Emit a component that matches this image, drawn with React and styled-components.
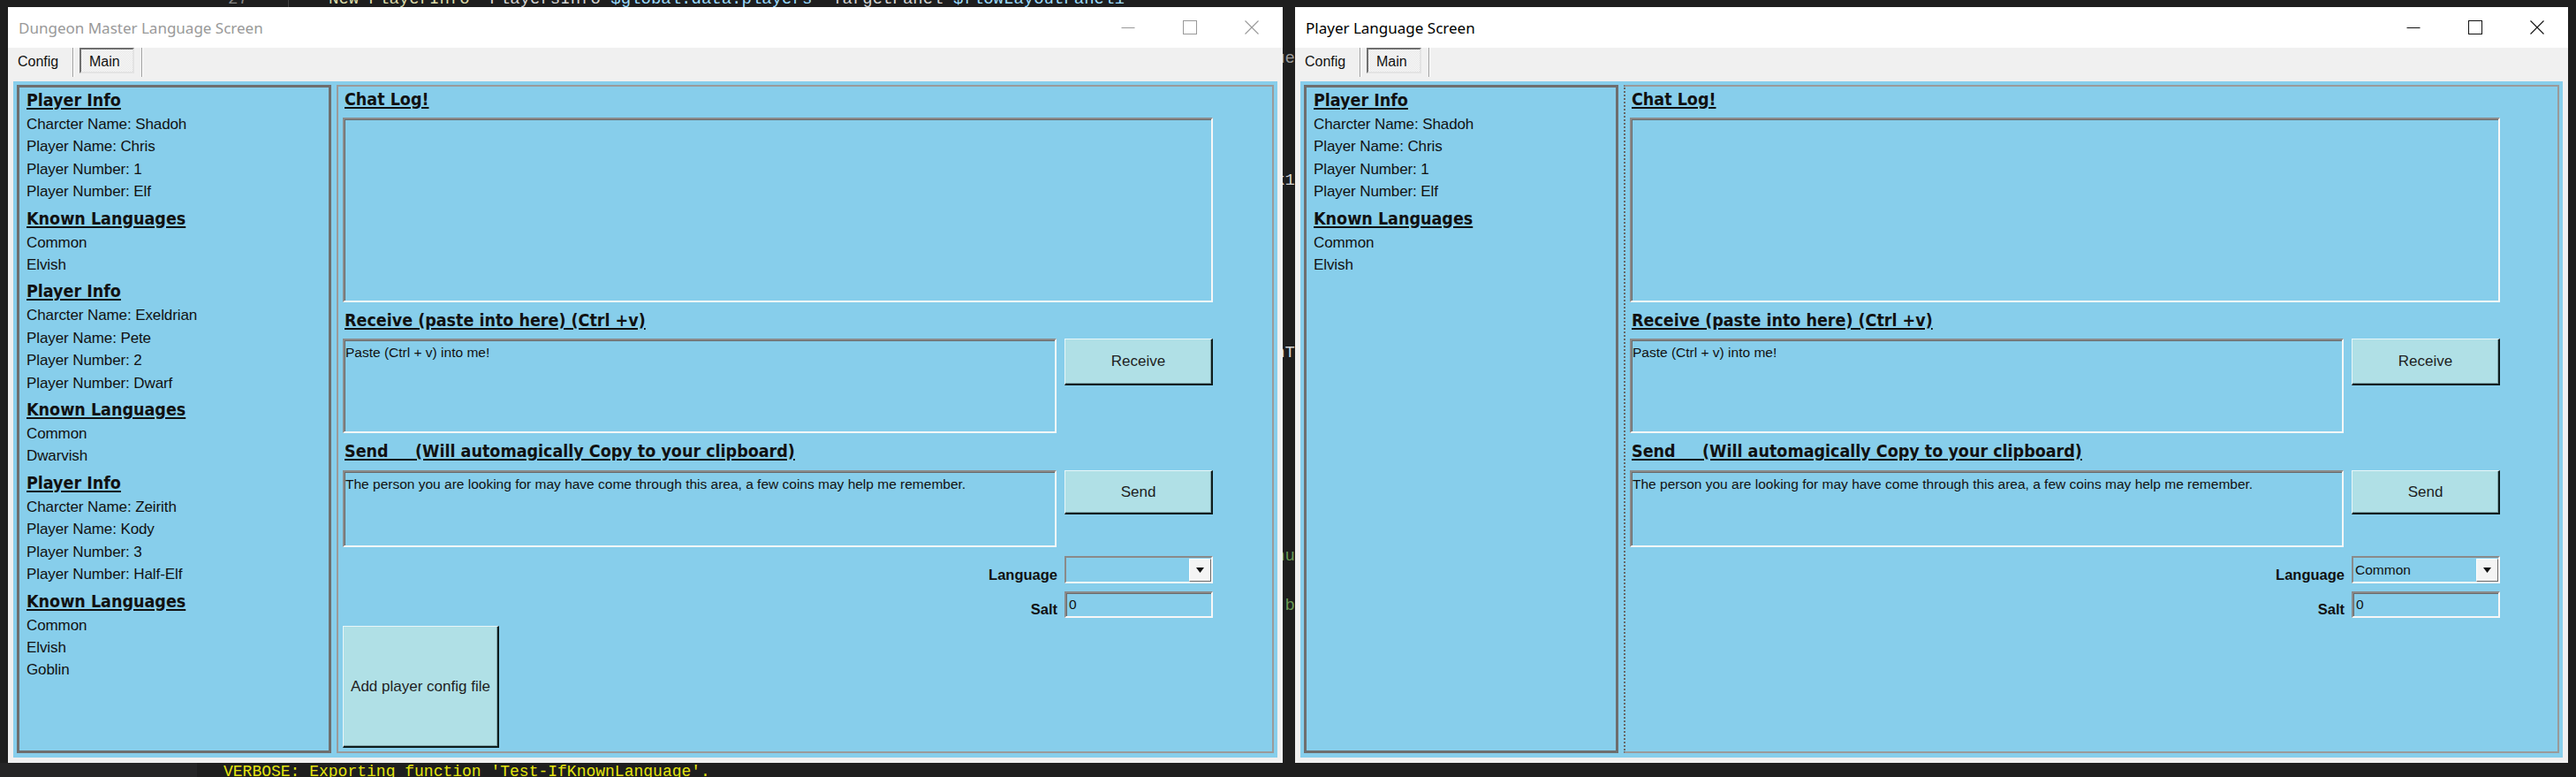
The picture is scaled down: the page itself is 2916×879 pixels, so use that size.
import React from 'react'
import styled, { createGlobalStyle } from 'styled-components'

/* ------------------------------ Global ----------------------------------- */
const GlobalStyle = createGlobalStyle`
  html, body {
    margin: 0;
    padding: 0;
    background: #1e1e1e;
  }
  body {
    width: 2916px;
    height: 879px;
    overflow: hidden;
    font-family: "Liberation Sans", Arial, sans-serif;
  }
`

const SKY = '#87ceeb'
const POWDER = '#b0e0e6'

/* ------------------------------ Desktop ---------------------------------- */
const Desktop = styled.div`
  width: 2916px;
  height: 879px;
  display: flex;
  flex-direction: column;
  background: #1e1e1e;
  overflow: hidden;
`

const CodeStrip = styled.div`
  height: 8px;
  overflow: hidden;
  display: flex;
  align-items: flex-start;
  font-family: "Liberation Mono", "DejaVu Sans Mono", monospace;
  font-size: 19px;
  line-height: 20px;
  white-space: pre;
`

const LineNo = styled.span`
  margin: -11px 0 0 258px;
  width: 68px;
  color: #858585;
`

const Guide = styled.span`
  width: 1px;
  height: 8px;
  background: #404040;
  margin-right: 45px;
`

const Code = styled.span`
  margin-top: -11px;
  color: ${p => p.$c || '#d4d4d4'};
`

const WindowRow = styled.div`
  display: flex;
  padding-left: 9px;
  height: 855px;
`

/* the editor text peeking out between the two windows */
const Gutter = styled.div`
  width: 14px;
  flex-shrink: 0;
  overflow: hidden;
  display: flex;
  flex-direction: column;
  align-items: flex-end;
  font-family: "Liberation Mono", "DejaVu Sans Mono", monospace;
  font-size: 19px;
  line-height: 20px;
  white-space: pre;
`

const Peek = styled.span`
  margin-top: ${p => p.$mt}px;
  color: ${p => p.$c || '#d4d4d4'};
`

const BottomStrip = styled.div`
  height: 16px;
  display: flex;
  overflow: hidden;
  font-family: "Liberation Mono", "DejaVu Sans Mono", monospace;
  font-size: 18px;
  line-height: 18px;
  white-space: pre;
`

const SideShade = styled.div`
  width: 223px;
  background: #252526;
`

const Verbose = styled.span`
  margin: 1px 0 0 30px;
  color: #e5e510;
`

/* ------------------------------ Window ----------------------------------- */
const Window = styled.div`
  width: ${p => p.$width}px;
  height: 855px;
  display: flex;
  flex-direction: column;
  background: #f0f0f0;
  flex-shrink: 0;
`

const TitleBar = styled.div`
  height: 46px;
  background: #fff;
  display: flex;
  align-items: center;
  flex-shrink: 0;
`

const Title = styled.div`
  padding-left: 12px;
  font-family: "Noto Sans", "Open Sans", sans-serif;
  font-size: 17px;
  color: ${p => (p.$active ? '#000' : '#999')};
`

const Captions = styled.div`
  margin-left: auto;
  display: flex;
  color: ${p => (p.$active ? '#111' : '#999')};
`

const CaptionButton = styled.div`
  width: 70px;
  height: 46px;
  display: flex;
  align-items: center;
  justify-content: center;
`

const TabStrip = styled.div`
  height: 38px;
  display: flex;
  align-items: flex-start;
  padding-left: 11px;
  flex-shrink: 0;
  font-size: 16px;
  color: #111;
`

const TabLabel = styled.div`
  width: 62px;
  height: 32px;
  line-height: 32px;
`

const TabSep = styled.div`
  width: 1px;
  height: 33px;
  background: #a0a0a0;
  border-right: 1px solid #fff;
  margin-left: ${p => p.$ml || 0}px;
`

const TabButton = styled.div`
  margin-left: 6px;
  width: 62px;
  height: 29px;
  box-sizing: border-box;
  border: 2px solid;
  border-color: #6f6f6f #e3e3e3 #e3e3e3 #6f6f6f;
  padding: 2px 0 0 9px;
  line-height: 23px;
  background-color: #fafafa;
  background-image: repeating-conic-gradient(#e6e6e6 0 25%, #fafafa 0 50%);
  background-size: 2px 2px;
`

const Body = styled.div`
  flex: 1;
  padding: 0 6px 6px;
  display: flex;
`

const TabPage = styled.div`
  flex: 1;
  background: ${SKY};
  padding: 4px 4px 5px;
  display: flex;
  gap: 6px;
`

/* ------------------------------ Panels ----------------------------------- */
const LeftPanel = styled.div`
  width: 356px;
  flex-shrink: 0;
  box-sizing: border-box;
  border: 3px solid #6e6e6e;
  padding: 0 8px;
`

const RightPanel = styled.div`
  flex: 1;
  box-sizing: border-box;
  border: 2px solid #9a9a9a;
  border-left-style: ${p => (p.$focused ? 'dotted' : 'solid')};
  border-left-color: ${p => (p.$focused ? '#666' : '#9a9a9a')};
  padding-left: 5px;
  display: flex;
  flex-direction: column;
  align-items: flex-start;
`

const Heading = styled.div`
  font-family: "DejaVu Sans Condensed", "DejaVu Sans", sans-serif;
  font-stretch: condensed;
  font-weight: bold;
  font-size: 19.5px;
  line-height: 29px;
  color: #111;
  text-decoration: underline;
  text-decoration-thickness: 2px;
  text-underline-offset: 2px;
  white-space: pre;
  margin-top: ${p => p.$mt ?? 3}px;
  margin-left: ${p => p.$ml || 0}px;
`

const Line = styled.div`
  font-size: 17px;
  letter-spacing: -0.1px;
  line-height: 25.4px;
  color: #111;
  white-space: nowrap;
`

const TextBox = styled.div`
  width: ${p => p.$width}px;
  height: ${p => p.$height}px;
  margin-top: ${p => p.$mt || 0}px;
  box-sizing: border-box;
  flex-shrink: 0;
  background: ${SKY};
  border: 2px solid;
  border-color: #8a8a8a #f7f7f7 #f7f7f7 #8a8a8a;
  box-shadow: inset 1px 1px 0 #6a6a6a;
  padding: 5px 0 0 1px;
  font-size: 15.5px;
  line-height: 18px;
  color: #111;
  white-space: nowrap;
  overflow: hidden;
`

const Row = styled.div`
  display: flex;
  gap: 9px;
  align-items: flex-start;
  margin-top: ${p => p.$mt || 0}px;
`

const Button = styled.div`
  width: ${p => p.$width}px;
  height: ${p => p.$height}px;
  margin-top: ${p => p.$mt || 0}px;
  box-sizing: border-box;
  flex-shrink: 0;
  background: ${POWDER};
  border-style: solid;
  border-width: 1px 2px 2px 1px;
  border-color: #e8f6f8 #0e1c1c #0e1c1c #e8f6f8;
  box-shadow: inset -1px -1px 0 #7fa5aa;
  display: flex;
  align-items: center;
  justify-content: center;
  font-size: 17px;
  color: #1e1e1e;
  white-space: nowrap;
`

const FieldRow = styled.div`
  width: 985px;
  display: flex;
  justify-content: flex-end;
  align-items: flex-end;
  gap: 8px;
  margin-top: ${p => p.$mt || 0}px;
`

const FieldLabel = styled.div`
  font-weight: bold;
  font-size: 16.5px;
  line-height: 20px;
  color: #111;
`

const Combo = styled.div`
  width: 168px;
  height: 31px;
  box-sizing: border-box;
  background: ${SKY};
  border: 2px solid;
  border-color: #8a8a8a #f7f7f7 #f7f7f7 #8a8a8a;
  display: flex;
  align-items: center;
  padding-left: 2px;
  font-size: 15.5px;
  color: #111;
`

const ComboValue = styled.div`
  flex: 1;
`

const DropButton = styled.div`
  width: 25px;
  height: 26px;
  box-sizing: border-box;
  background: #f4f4f4;
  border: 1px solid;
  border-color: #fff #6a6a6a #6a6a6a #fff;
  display: flex;
  align-items: center;
  justify-content: center;
`

const SaltBox = styled(TextBox)`
  padding: 4px 0 0 3px;
`

/* ------------------------------ Icons ------------------------------------ */
const MinIcon = () => (
  <svg width="16" height="16" viewBox="0 0 16 16">
    <line x1="0.5" y1="8.5" x2="15.5" y2="8.5" stroke="currentColor" strokeWidth="1" />
  </svg>
)

const MaxIcon = () => (
  <svg width="16" height="16" viewBox="0 0 16 16">
    <rect x="0.5" y="0.5" width="15" height="15" fill="none" stroke="currentColor" strokeWidth="1" />
  </svg>
)

const CloseIcon = () => (
  <svg width="16" height="16" viewBox="0 0 16 16">
    <path d="M0.5 0.5 L15.5 15.5 M15.5 0.5 L0.5 15.5" stroke="currentColor" strokeWidth="1.1" fill="none" />
  </svg>
)

const Arrow = () => (
  <svg width="9" height="6" viewBox="0 0 9 6">
    <path d="M0 0 H9 L4.5 6 Z" fill="#111" />
  </svg>
)

/* ------------------------------ Data ------------------------------------- */
const players = [
  { character: 'Shadoh', player: 'Chris', number: '1', race: 'Elf', languages: ['Common', 'Elvish'] },
  { character: 'Exeldrian', player: 'Pete', number: '2', race: 'Dwarf', languages: ['Common', 'Dwarvish'] },
  { character: 'Zeirith', player: 'Kody', number: '3', race: 'Half-Elf', languages: ['Common', 'Elvish', 'Goblin'] },
]

const SEND_TEXT = 'The person you are looking for may have come through this area, a few coins may help me remember.'

/* ------------------------------ Parts ------------------------------------ */
const PlayerBlock = ({ p, first }) => (
  <>
    <Heading $mt={first ? 0 : 3}>Player Info</Heading>
    <Line>Charcter Name: {p.character}</Line>
    <Line>Player Name: {p.player}</Line>
    <Line>Player Number: {p.number}</Line>
    <Line>Player Number: {p.race}</Line>
    <Heading>Known Languages</Heading>
    {p.languages.map(l => (
      <Line key={l}>{l}</Line>
    ))}
  </>
)

const LanguageWindow = ({ title, active, width, list, language, showAdd }) => (
  <Window $width={width}>
    <TitleBar>
      <Title $active={active}>{title}</Title>
      <Captions $active={active}>
        <CaptionButton><MinIcon /></CaptionButton>
        <CaptionButton><MaxIcon /></CaptionButton>
        <CaptionButton><CloseIcon /></CaptionButton>
      </Captions>
    </TitleBar>
    <TabStrip>
      <TabLabel>Config</TabLabel>
      <TabSep />
      <TabButton>Main</TabButton>
      <TabSep $ml={8} />
    </TabStrip>
    <Body>
      <TabPage>
        <LeftPanel>
          {list.map((p, i) => (
            <PlayerBlock key={p.character} p={p} first={i === 0} />
          ))}
        </LeftPanel>
        <RightPanel $focused={active}>
          <Heading $mt={0} $ml={2}>Chat Log!</Heading>
          <TextBox $width={985} $height={209} $mt={6} />
          <Heading $mt={6} $ml={2}>Receive (paste into here) (Ctrl +v)</Heading>
          <Row $mt={6}>
            <TextBox $width={808} $height={107}>Paste (Ctrl + v) into me!</TextBox>
            <Button $width={168} $height={53}>Receive</Button>
          </Row>
          <Heading $mt={6} $ml={2}>{'Send     (Will automagically Copy to your clipboard)'}</Heading>
          <Row $mt={7}>
            <TextBox $width={808} $height={87}>{SEND_TEXT}</TextBox>
            <Button $width={168} $height={50}>Send</Button>
          </Row>
          <FieldRow $mt={10}>
            <FieldLabel>Language</FieldLabel>
            <Combo>
              <ComboValue>{language}</ComboValue>
              <DropButton><Arrow /></DropButton>
            </Combo>
          </FieldRow>
          <FieldRow $mt={9}>
            <FieldLabel>Salt</FieldLabel>
            <SaltBox $width={168} $height={30}>0</SaltBox>
          </FieldRow>
          {showAdd && (
            <Button $width={177} $height={138} $mt={9}>Add player config file</Button>
          )}
        </RightPanel>
      </TabPage>
    </Body>
  </Window>
)

/* ------------------------------ App -------------------------------------- */
export default function App() {
  return (
    <>
      <GlobalStyle />
      <Desktop>
        <CodeStrip>
          <LineNo>27</LineNo>
          <Guide />
          <Code $c="#dcdcaa">New-PlayerInfo</Code>
          <Code> -PlayersInfo </Code>
          <Code $c="#9cdcfe">$global:data.players</Code>
          <Code> -TargetPanel </Code>
          <Code $c="#9cdcfe">$flowLayoutPanel1</Code>
        </CodeStrip>
        <WindowRow>
          <LanguageWindow
            title="Dungeon Master Language Screen"
            width={1443}
            list={players}
            language=""
            showAdd
          />
          <Gutter>
            <Peek $mt={48} $c="#9a9a9a">ue</Peek>
            <Peek $mt={118} $c="#d4d4d4">k1</Peek>
            <Peek $mt={175} $c="#d4d4d4">hT</Peek>
            <Peek $mt={210} $c="#6a9955">nu</Peek>
            <Peek $mt={36} $c="#6a9955">b</Peek>
          </Gutter>
          <LanguageWindow
            title="Player Language Screen"
            active
            width={1441}
            list={players.slice(0, 1)}
            language="Common"
          />
        </WindowRow>
        <BottomStrip>
          <SideShade />
          <Verbose>VERBOSE: Exporting function 'Test-IfKnownLanguage'.</Verbose>
        </BottomStrip>
      </Desktop>
    </>
  )
}
